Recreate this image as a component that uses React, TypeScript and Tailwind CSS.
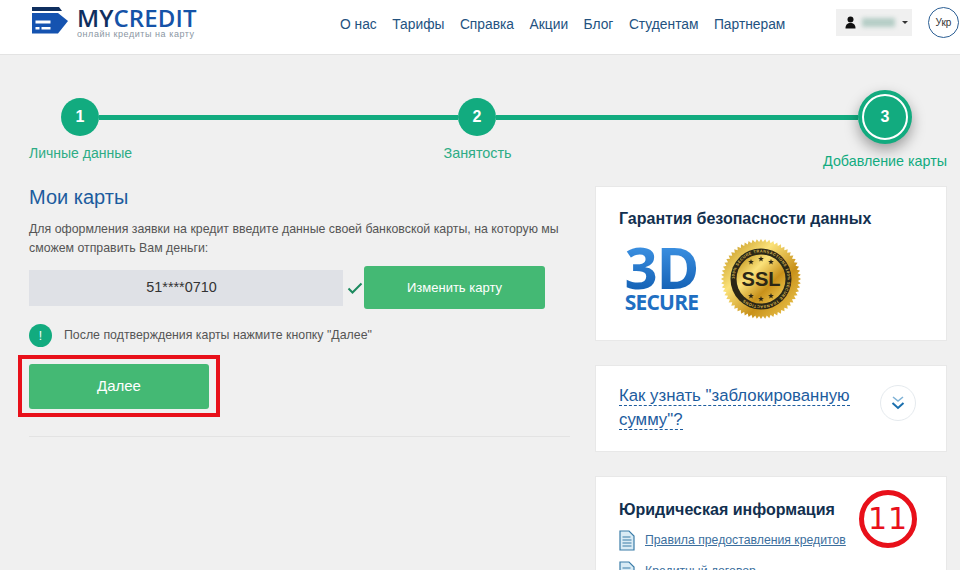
const nav = ["О нас", "Тарифы", "Справка", "Акции", "Блог", "Студентам", "Партнерам"];

function Logo() {
  return (
    <svg width="38" height="30" viewBox="0 0 38 30" className="shrink-0">
      <path d="M0 1h27l3 4H0z" fill="#0f2f5f" />
      <path d="M0 7h26l10 8-10 12.5H0z" fill="#1553b0" />
      <rect x="3.5" y="14.5" width="15" height="3" fill="#fff" />
      <rect x="3.5" y="21" width="4" height="2.5" fill="#fff" />
      <rect x="9.5" y="21" width="9" height="2.5" fill="#fff" />
    </svg>
  );
}

function Step({ n }: { n: number }) {
  return (
    <div className="w-[38px] h-[38px] rounded-full bg-[#12ab7f] flex items-center justify-center text-white text-[16px] font-bold shrink-0">
      {n}
    </div>
  );
}

function star(cx: number, cy: number, r: number) {
  const pts: string[] = [];
  for (let i = 0; i < 10; i++) {
    const a = -Math.PI / 2 + (i / 10) * Math.PI * 2;
    const d = i % 2 ? r * 0.42 : r;
    pts.push(`${cx + d * Math.cos(a)},${cy + d * Math.sin(a)}`);
  }
  return pts.join(" ");
}

function Seal() {
  const points: string[] = [];
  for (let i = 0; i < 120; i++) {
    const a = (i / 120) * Math.PI * 2;
    const r = i % 2 ? 37 : 40;
    points.push(`${41 + r * Math.cos(a)},${41 + r * Math.sin(a)}`);
  }
  const stars = [
    [31, 24],
    [41, 21],
    [51, 24],
    [31, 58],
    [41, 61],
    [51, 58],
  ];
  return (
    <svg width="82" height="82" viewBox="0 0 82 82" className="shrink-0">
      <defs>
        <linearGradient id="gold" x1="0" y1="0" x2="1" y2="1">
          <stop offset="0" stopColor="#b8860b" />
          <stop offset="0.35" stopColor="#fbe27a" />
          <stop offset="0.65" stopColor="#c8911a" />
          <stop offset="1" stopColor="#f7d45c" />
        </linearGradient>
        <path id="ring" d="M41 41m-26.5 0a26.5 26.5 0 1 1 53 0a26.5 26.5 0 1 1-53 0" />
      </defs>
      <polygon points={points.join(" ")} fill="url(#gold)" />
      <circle cx="41" cy="41" r="30.5" fill="#2b2716" />
      <circle cx="41" cy="41" r="24.5" fill="url(#gold)" />
      <text fontSize="4" fill="#d8b64f" fontWeight="700" fontFamily="Liberation Sans, sans-serif" letterSpacing="0.4">
        <textPath href="#ring">100% SECURE TRANSACTIONS 100% SECURE TRANSACTIONS</textPath>
      </text>
      <text x="41" y="48" textAnchor="middle" fontSize="20" fontWeight="700" fill="#2b2716" fontFamily="Liberation Sans, sans-serif">
        SSL
      </text>
      {stars.map(([x, y]) => (
        <polygon key={`${x}-${y}`} points={star(x, y, 3)} fill="#2b2716" />
      ))}
    </svg>
  );
}

function DocIcon() {
  return (
    <svg width="16" height="21" viewBox="0 0 16 21" className="shrink-0">
      <path d="M1 1h9l5 5v14H1z" fill="#d9ebf5" stroke="#3a7ca8" strokeWidth="1.2" />
      <path d="M3.5 7h8M3.5 10h9M3.5 13h9M3.5 16h9" stroke="#3a7ca8" strokeWidth="1.2" />
    </svg>
  );
}

export default function App() {
  return (
    <div className="relative h-[570px] w-[960px] overflow-hidden bg-[#f0f0f0] font-['Liberation_Sans',sans-serif]">
      {/* Header */}
      <header className="h-[55px] bg-white border-b border-[#e3e3e3] flex items-start">
        <div className="flex items-start pl-[32px] pt-[6px] w-[340px]">
          <Logo />
          <div className="ml-[7px]">
            <div className="text-[24px] leading-[23px] tracking-[0.1px] font-['Open_Sans',sans-serif] font-semibold">
              <span className="text-[#0f2f5f]">MY</span>
              <span className="text-[#1553a8]">CREDIT</span>
            </div>
            <div className="text-[9px] leading-[10px] tracking-[0.55px] text-[#8a96a3]">онлайн кредиты на карту</div>
          </div>
        </div>
        <nav className="flex gap-[15.5px] pt-[17px] text-[13.8px] leading-[16px] text-[#23527f]">
          {nav.map((n) => (
            <span key={n}>{n}</span>
          ))}
        </nav>
        <div className="absolute left-[836px] top-[9px] w-[76px] h-[27px] bg-[#f0f0f0] flex items-center pl-[9px]">
          <svg width="11" height="13" viewBox="0 0 11 13">
            <circle cx="5.5" cy="3.5" r="3" fill="#111" />
            <path d="M0.5 12.5c0-4 2-5.5 5-5.5s5 1.5 5 5.5z" fill="#111" />
          </svg>
          <div className="ml-[6px] w-[33px] h-[9px] bg-[#b5cdc6] blur-[2px]" />
          <div className="ml-[7px] w-0 h-0 border-x-[3px] border-x-transparent border-t-[3px] border-t-[#333]" />
        </div>
        <div className="absolute left-[928px] top-[7px] w-[31px] h-[31px] rounded-full border border-[#2c5f94] flex items-center justify-center text-[10px] text-[#333]">
          Укр
        </div>
      </header>

      {/* Stepper */}
      <div className="pt-[35px] pl-[61px] pr-[48px] flex items-center h-[89px]">
        <Step n={1} />
        <div className="w-[359px] h-[5px] bg-[#12ab7f]" />
        <Step n={2} />
        <div className="flex-1 h-[5px] bg-[#12ab7f]" />
        <div className="w-[54px] h-[54px] rounded-full bg-[#12ab7f] flex items-center justify-center shrink-0 shadow-[0_6px_14px_rgba(0,0,0,0.35)]">
          <div className="w-[46px] h-[46px] rounded-full border-2 border-white flex items-center justify-center text-white text-[16px] font-bold">
            3
          </div>
        </div>
      </div>
      <div className="flex items-start justify-between pl-[29px] pr-[13px] text-[14px] leading-[16px] text-[#2dac85]">
        <span className="mt-[1px]">Личные данные</span>
        <span className="mt-[1px] text-[14.4px]">Занятость</span>
        <span className="mt-[9px] text-[14.3px] text-[#12ab7f]">Добавление карты</span>
      </div>

      {/* Main */}
      <div className="flex pl-[29px] pr-[13px] gap-[25px] mt-[17px]">
        <div className="w-[541px] shrink-0">
          <h2 className="mt-[-1px] text-[20px] leading-[24px] text-[#1c5c9e]">Мои карты</h2>
          <p className="mt-[11px] text-[12.35px] leading-[19px] text-[#555]">
            Для оформления заявки на кредит введите данные своей банковской карты, на которую мы сможем отправить Вам деньги:
          </p>
          <div className="flex items-center mt-[8px]">
            <div className="w-[314px] h-[36px] bg-[#dfe1e6] flex items-center justify-center pr-[9px] text-[14.4px] text-[#333]">51****0710</div>
            <svg width="16" height="12" viewBox="0 0 16 12" className="ml-[4px]">
              <path d="M1.5 6.5l4 4 9-9" fill="none" stroke="#1d8a5f" strokeWidth="2" />
            </svg>
            <button className="ml-px w-[181px] h-[43px] rounded-[3px] bg-[#44b974] text-white text-[13px]">Изменить карту</button>
          </div>
          <div className="flex items-center mt-[15px]">
            <div className="w-[23px] h-[23px] rounded-full bg-[#12ab7f] text-white text-[12px] flex items-center justify-center">!</div>
            <span className="ml-[12px] text-[12.35px] text-[#555]">После подтверждения карты нажмите кнопку "Далее"</span>
          </div>
          <div className="ml-[-11px] mt-[8px] w-[202px] h-[62px] border-[4px] border-[#e8101a] flex items-center pl-[7px]">
            <button className="w-[180px] h-[45px] rounded-[3px] bg-[#44b974] text-white text-[15px]">Далее</button>
          </div>
          <div className="h-px bg-[#e3e3e3] mt-[19px]" />
        </div>

        <div className="flex-1 flex flex-col gap-[24px] min-w-0">
          <div className="h-[155px] bg-white border border-[#e8e8e8] pl-[23px] pt-[23px]">
            <h3 className="text-[16px] leading-[18px] font-bold text-[#12304f]">Гарантия безопасности данных</h3>
            <div className="flex items-start mt-[13px] ml-[3px] gap-[19px]">
              <div className="w-[79px] font-['Open_Sans',sans-serif] font-bold text-center">
                <div className="text-[58px] leading-[51px] tracking-[-1px] bg-gradient-to-b from-[#3f95e6] to-[#1260b4] bg-clip-text text-transparent">3D</div>
                <div className="text-[21px] leading-[20px] tracking-[-0.8px] text-[#1f6fc2]">SECURE</div>
              </div>
              <div className="mt-[-3px]">
                <Seal />
              </div>
            </div>
          </div>

          <div className="h-[87px] bg-white border border-[#e8e8e8] pl-[23px] pt-[18px] flex items-start">
            <div className="w-[240px] text-[16.8px] leading-[24px] text-[#1c5c9e]">
              <span className="border-b border-dashed border-[#1c5c9e] whitespace-nowrap">Как узнать "заблокированную</span>
              <br />
              <span className="border-b border-dashed border-[#1c5c9e]">сумму"?</span>
            </div>
            <div className="ml-[21px] mt-[1px] w-[36px] h-[36px] rounded-full border border-[#e5eaee] flex items-center justify-center">
              <svg width="14" height="16" viewBox="0 0 14 16">
                <path d="M2 2l5 4 5-4" fill="none" stroke="#7fb2d6" strokeWidth="1.6" />
                <path d="M1.5 8l5.5 5 5.5-5" fill="none" stroke="#1a6fae" strokeWidth="2" />
              </svg>
            </div>
          </div>

          <div className="h-[120px] bg-white border border-[#e8e8e8] pl-[23px] pt-[24px]">
            <h3 className="text-[16px] leading-[18px] font-bold text-[#12304f]">Юридическая информация</h3>
            <div className="flex items-center mt-[11px]">
              <DocIcon />
              <span className="ml-[10px] text-[12.25px] underline text-[#3c6f9e]">Правила предоставления кредитов</span>
            </div>
            <div className="flex items-center mt-[10px]">
              <DocIcon />
              <span className="ml-[10px] text-[12.25px] underline text-[#3c6f9e]">Кредитный договор</span>
            </div>
          </div>
        </div>
      </div>

      {/* Annotation */}
      <div className="absolute left-[859px] top-[490px] w-[58px] h-[58px] rounded-full border-[5px] border-[#e8101a] bg-white flex items-center justify-center text-[30px] tracking-[1px] leading-none text-[#e8101a] font-['DejaVu_Sans',sans-serif]">
        11
      </div>
    </div>
  );
}
